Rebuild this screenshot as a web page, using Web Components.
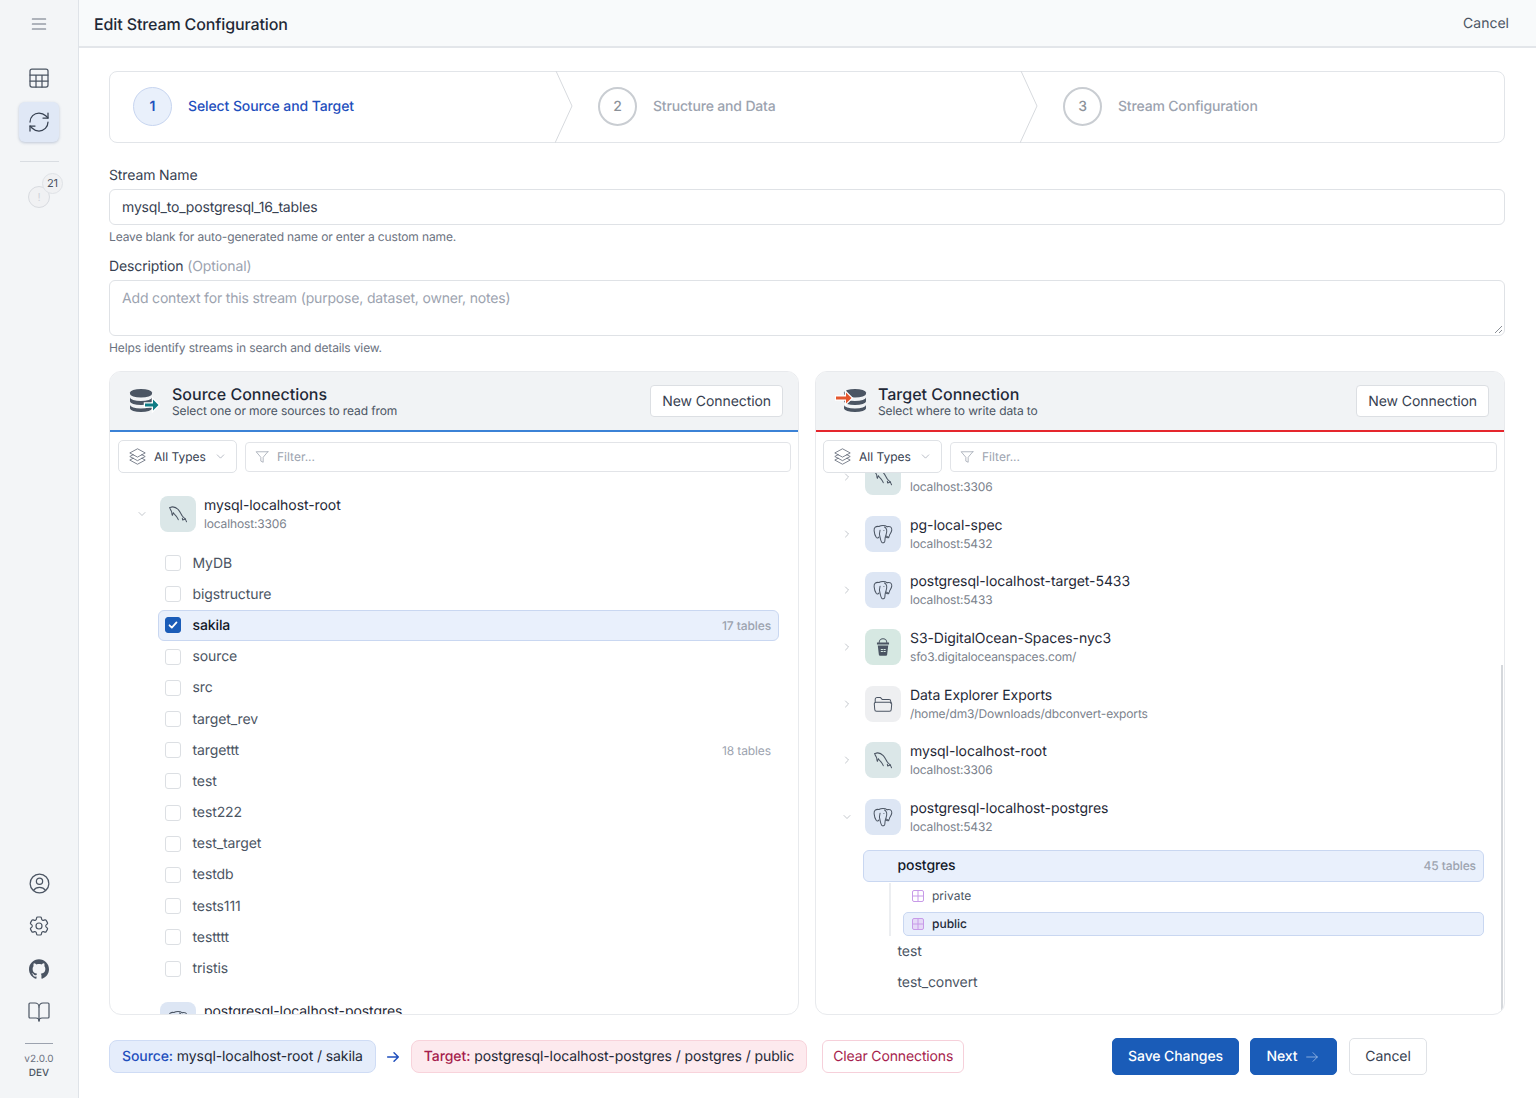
<!DOCTYPE html>
<html lang="en">
<head>
<meta charset="utf-8">
<title>Edit Stream Configuration</title>
<style>
  html, body { margin: 0; height: 100%; }
  body {
    display: flex;
    width: 1536px;
    height: 1098px;
    overflow: hidden;
    background: #fff;
    color: #1f2937;
    font-family: Inter, "Liberation Sans", sans-serif;
    text-rendering: geometricPrecision;
  }
</style>
</head>
<body>
<app-sidebar></app-sidebar>
<main-view>
  <page-header slot="header" heading="Edit Stream Configuration"></page-header>

  <stream-stepper></stream-stepper>

  <form-field label="Stream Name" value="mysql_to_postgresql_16_tables" help="Leave blank for auto-generated name or enter a custom name."></form-field>
  <form-field label="Description" optional="(Optional)" multiline placeholder="Add context for this stream (purpose, dataset, owner, notes)" help="Helps identify streams in search and details view."></form-field>

  <panel-row>
    <conn-panel heading="Source Connections" sub="Select one or more sources to read from" kind="source">
      <conn-item name="mysql-localhost-root" host="localhost:3306" type="mysql" open></conn-item>
      <db-row name="MyDB" checkable></db-row>
      <db-row name="bigstructure" checkable></db-row>
      <db-row name="sakila" count="17 tables" checkable checked selected></db-row>
      <db-row name="source" checkable></db-row>
      <db-row name="src" checkable></db-row>
      <db-row name="target_rev" checkable></db-row>
      <db-row name="targettt" count="18 tables" checkable></db-row>
      <db-row name="test" checkable></db-row>
      <db-row name="test222" checkable></db-row>
      <db-row name="test_target" checkable></db-row>
      <db-row name="testdb" checkable></db-row>
      <db-row name="tests111" checkable></db-row>
      <db-row name="testttt" checkable></db-row>
      <db-row name="tristis" checkable></db-row>
      <conn-item name="postgresql-localhost-postgres" type="postgres" spaced></conn-item>
    </conn-panel>

    <conn-panel heading="Target Connection" sub="Select where to write data to" kind="target" scrolled>
      <conn-item host="localhost:3306" type="mysql"></conn-item>
      <conn-item name="pg-local-spec" host="localhost:5432" type="postgres"></conn-item>
      <conn-item name="postgresql-localhost-target-5433" host="localhost:5433" type="postgres"></conn-item>
      <conn-item name="S3-DigitalOcean-Spaces-nyc3" host="sfo3.digitaloceanspaces.com/" type="s3"></conn-item>
      <conn-item name="Data Explorer Exports" host="/home/dm3/Downloads/dbconvert-exports" type="folder"></conn-item>
      <conn-item name="mysql-localhost-root" host="localhost:3306" type="mysql"></conn-item>
      <conn-item name="postgresql-localhost-postgres" host="localhost:5432" type="postgres" open></conn-item>
      <db-row name="postgres" count="45 tables" selected></db-row>
      <schema-group>
        <schema-row name="private"></schema-row>
        <schema-row name="public" selected></schema-row>
      </schema-group>
      <db-row name="test"></db-row>
      <db-row name="test_convert"></db-row>
    </conn-panel>
  </panel-row>

  <stream-footer></stream-footer>
</main-view>

<script>
/** Stroke and fill paths for every icon on the page, in a 24x24 box. */
const ICONS = {
  menu: '<path d="M4 6h16M4 12h16M4 18h16"/>',
  table: '<rect x="3" y="3" width="18" height="18" rx="2"/><path d="M3 9h18M3 15h18M9 9v12M15 9v12"/>',
  refresh: '<path d="M3 12a9 9 0 0 1 9-9 9.75 9.75 0 0 1 6.74 2.74L21 8"/><path d="M21 3v5h-5"/><path d="M21 12a9 9 0 0 1-9 9 9.75 9.75 0 0 1-6.74-2.74L3 16"/><path d="M8 16H3v5"/>',
  user: '<path d="M17.982 18.725A7.488 7.488 0 0 0 12 15.75a7.488 7.488 0 0 0-5.982 2.975m11.963 0a9 9 0 1 0-11.963 0m11.963 0A8.966 8.966 0 0 1 12 21a8.966 8.966 0 0 1-5.982-2.275M15 9.75a3 3 0 1 1-6 0 3 3 0 0 1 6 0Z"/>',
  gear: '<path d="M9.594 3.94c.09-.542.56-.94 1.11-.94h2.593c.55 0 1.02.398 1.11.94l.213 1.281c.063.374.313.686.645.87.074.04.147.083.22.127.325.196.72.257 1.075.124l1.217-.456a1.125 1.125 0 0 1 1.37.49l1.296 2.247a1.125 1.125 0 0 1-.26 1.431l-1.003.827c-.293.241-.438.613-.43.992a7.723 7.723 0 0 1 0 .255c-.008.378.137.75.43.991l1.004.827c.424.35.534.955.26 1.43l-1.298 2.247a1.125 1.125 0 0 1-1.369.491l-1.217-.456c-.355-.133-.75-.072-1.076.124a6.47 6.47 0 0 1-.22.128c-.331.183-.581.495-.644.869l-.213 1.281c-.09.543-.56.94-1.11.94h-2.594c-.55 0-1.019-.398-1.11-.94l-.213-1.281c-.062-.374-.312-.686-.644-.87a6.52 6.52 0 0 1-.22-.127c-.325-.196-.72-.257-1.076-.124l-1.217.456a1.125 1.125 0 0 1-1.369-.49l-1.297-2.247a1.125 1.125 0 0 1 .26-1.431l1.004-.827c.292-.24.437-.613.43-.991a6.932 6.932 0 0 1 0-.255c.007-.38-.138-.751-.43-.992l-1.004-.827a1.125 1.125 0 0 1-.26-1.43l1.297-2.247a1.125 1.125 0 0 1 1.37-.491l1.216.456c.356.133.751.072 1.076-.124.072-.044.146-.086.22-.128.332-.183.582-.495.644-.869l.214-1.28Z"/><path d="M15 12a3 3 0 1 1-6 0 3 3 0 0 1 6 0Z"/>',
  github: '<path fill="currentColor" stroke="none" d="M12 .297c-6.63 0-12 5.373-12 12 0 5.303 3.438 9.8 8.205 11.385.6.113.82-.258.82-.577 0-.285-.01-1.04-.015-2.04-3.338.724-4.042-1.61-4.042-1.61C4.422 18.07 3.633 17.7 3.633 17.7c-1.087-.744.084-.729.084-.729 1.205.084 1.838 1.236 1.838 1.236 1.07 1.835 2.809 1.305 3.495.998.108-.776.417-1.305.76-1.605-2.665-.3-5.466-1.332-5.466-5.93 0-1.31.465-2.38 1.235-3.22-.135-.303-.54-1.523.105-3.176 0 0 1.005-.322 3.3 1.23.96-.267 1.98-.399 3-.405 1.02.006 2.04.138 3 .405 2.28-1.552 3.285-1.23 3.285-1.23.645 1.653.24 2.873.12 3.176.765.84 1.23 1.91 1.23 3.22 0 4.61-2.805 5.625-5.475 5.92.42.36.81 1.096.81 2.22 0 1.606-.015 2.896-.015 3.286 0 .315.21.69.825.57C20.565 22.092 24 17.592 24 12.297c0-6.627-5.373-12-12-12"/>',
  book: '<path d="M12 7v14"/><path d="M3 18a1 1 0 0 1-1-1V4a1 1 0 0 1 1-1h5a4 4 0 0 1 4 4 4 4 0 0 1 4-4h5a1 1 0 0 1 1 1v13a1 1 0 0 1-1 1h-6a3 3 0 0 0-3 3 3 3 0 0 0-3-3z"/>',
  layers: '<path d="M6.429 9.75 2.25 12l4.179 2.25m0-4.5 5.571 3 5.571-3m-11.142 0L2.25 7.5 12 2.25l9.75 5.25-4.179 2.25m0 0L21.75 12l-4.179 2.25m0 0 4.179 2.25L12 21.75 2.25 16.5l4.179-2.25m11.142 0-5.571 3-5.571-3"/>',
  funnel: '<path d="M22 3H2l8 9.46V19l4 2v-8.54L22 3z"/>',
  down: '<path d="M6 9l6 6 6-6"/>',
  right: '<path d="M9 6l6 6-6 6"/>',
  arrow: '<path d="M4 12h16M13.5 5.5 20 12l-6.5 6.5"/>',
  check: '<path d="M6 12.5l4 4 8-9"/>',
  mysql: '<path d="M3 5c3-1.4 6.5-.7 9.3 2.2 2.2 2.3 3 5 4.4 7 1 1.4 2.3 2.3 3.3 3.2"/><path d="M3 5c.2 1.8 1.5 3 2 4.5.4 1.3.1 2.6.8 4 .6-1 .8-2.1 1.1-3 1 1.8 2.6 3 3.8 4.7.7 1 1.2 2 1.6 3"/><path d="M20 17.4c.4 1 .9 2 1.3 3.1M20 17.4l-2.9 1.1M16.7 16.5l.4 2"/>',
  postgres: '<path d="M7.5 3.8C4.2 3.2 2 5 2.3 8.3c.2 2.5 1.1 5.6 2.3 7.3.9 1.2 2.1 1 2.9-.4"/><path d="M7.5 3.8C8.9 3 10.4 2.7 12 2.7c1.7 0 3.3.4 4.4 1.3"/><path d="M16.4 4c3-.9 5.4.5 5.2 3.5-.1 2-1.2 3.5-2.2 5-.5.9-.2 2.1-1.1 2.6-.9.5-1.9-.1-2.4-.8"/><path d="M8.8 7.8c-.9 2.5-.8 5.5.1 8.3.5 1.8.7 3.9 1.8 5 1.2 1.1 3 .5 3.3-1.3.2-1.6.1-3.6.8-5.4.8-2.2 1.8-3.9 1.2-6.8-.3-1.3-1.1-2.6-2.3-3.3"/><path d="M13 8.2h.01M15.1 15.4c1.1.7 2.2.9 3.3.5"/>',
  s3: '<path d="M7.8 7.2a4.2 4.2 0 0 1 8.4 0"/><path fill="currentColor" stroke="none" d="M5.4 7h13.2v2.4H5.4zM6.3 10.4h11.4l-1.2 10.1c-.1.7-.6 1.1-1.2 1.1H8.7c-.6 0-1.1-.4-1.2-1.1z"/><path stroke="#d6e8e2" d="M10 14.8h1.5M13 14.8h1.5M10 16.8h1.5M13 16.8h1.5"/>',
  folder: '<path d="M3.5 10V7a2 2 0 0 1 2-2h3.8l2 2.2h7.2a2 2 0 0 1 2 2v2"/><path d="M2.5 12a2 2 0 0 1 2-2h15a2 2 0 0 1 2 2l-.5 6a2 2 0 0 1-2 2H5a2 2 0 0 1-2-2z"/>'
};

/**
 * Inline SVG icon.
 * @extends HTMLElement
 */
class UiIcon extends HTMLElement {
  constructor() {
    super();
    this.attachShadow({ mode: 'open' });
  }

  connectedCallback() {
    const size = this.getAttribute('size') || 20;
    const weight = this.getAttribute('weight') || 1.5;
    this.shadowRoot.innerHTML = `
      <style>
        :host { display: inline-flex; flex: none; width: ${size}px; height: ${size}px; }
        svg { display: block; width: 100%; height: 100%; }
      </style>
      <svg viewBox="0 0 24 24" fill="none" stroke="currentColor" stroke-width="${weight}" stroke-linecap="round" stroke-linejoin="round">${ICONS[this.getAttribute('name')]}</svg>`;
  }
}

/**
 * Left navigation rail.
 * @extends HTMLElement
 */
class AppSidebar extends HTMLElement {
  constructor() {
    super();
    this.attachShadow({ mode: 'open' });
  }

  connectedCallback() {
    this.shadowRoot.innerHTML = `
      <style>
        :host {
          display: flex; flex-direction: column; align-items: center; flex: none;
          box-sizing: border-box; width: 79px; height: 1098px;
          background: #f3f5f7; border-right: 1px solid #dfe3e8; color: #4b5563;
        }
        .burger { height: 48px; display: flex; align-items: center; color: #6b7280; }
        .btn { width: 40px; height: 40px; display: flex; align-items: center; justify-content: center; border-radius: 6px; }
        .nav { display: flex; flex-direction: column; gap: 4px; margin-top: 10px; }
        .active { background: #e0e8f6; box-shadow: 0 1px 3px rgba(30, 64, 120, .25); color: #374151; }
        hr { border: 0; height: 1px; background: #d9dde2; width: 39px; margin: 19px 0 0; }
        .alert { position: relative; margin-top: 24px; width: 20px; height: 20px; border: 1px solid #d8dbe0; border-radius: 50%; background: #f0f1f3; color: #d1d5db; font-size: 11px; line-height: 20px; text-align: center; }
        .badge { position: absolute; left: 13px; top: -14px; width: 19px; height: 19px; border: 1px solid #dfe2e6; border-radius: 50%; background: #f0f1f3; color: #4b5563; font-size: 11px; line-height: 19px; }
        .bottom { margin-top: auto; display: flex; flex-direction: column; align-items: center; gap: 3px; }
        .rule { width: 28px; height: 1px; background: #9ca3af; margin: 8px 0 0; }
        .ver { padding: 5px 0 18px; font-size: 10px; line-height: 14px; text-align: center; color: #6b7280; }
        .ver b { display: block; font-weight: 500; color: #4b5563; }
      </style>
      <div class="burger"><ui-icon name="menu" size="20" weight="1.3"></ui-icon></div>
      <div class="nav">
        <div class="btn"><ui-icon name="table" size="24" weight="1.25"></ui-icon></div>
        <div class="btn active"><ui-icon name="refresh" size="24" weight="1.25"></ui-icon></div>
      </div>
      <hr>
      <div class="alert">!<div class="badge">21</div></div>
      <div class="bottom">
        <div class="btn"><ui-icon name="user" size="25" weight="1.2"></ui-icon></div>
        <div class="btn"><ui-icon name="gear" size="24" weight="1.2"></ui-icon></div>
        <div class="btn"><ui-icon name="github" size="20"></ui-icon></div>
        <div class="btn"><ui-icon name="book" size="24" weight="1.2"></ui-icon></div>
        <div class="rule"></div>
        <div class="ver">v2.0.0<b>DEV</b></div>
      </div>`;
  }
}

/**
 * Page body: a header slot over a padded column.
 * @extends HTMLElement
 */
class MainView extends HTMLElement {
  constructor() {
    super();
    this.attachShadow({ mode: 'open' });
  }

  connectedCallback() {
    this.shadowRoot.innerHTML = `
      <style>
        :host { display: flex; flex-direction: column; flex: 1; min-width: 0; height: 1098px; }
        .body { display: flex; flex-direction: column; padding: 23px 31px 0 30px; }
      </style>
      <slot name="header"></slot>
      <div class="body"><slot></slot></div>`;
  }
}

/**
 * Top bar with the page title and a cancel link.
 * @extends HTMLElement
 */
class PageHeader extends HTMLElement {
  constructor() {
    super();
    this.attachShadow({ mode: 'open' });
  }

  connectedCallback() {
    this.shadowRoot.innerHTML = `
      <style>
        :host {
          display: flex; align-items: center; justify-content: space-between;
          box-sizing: border-box; height: 48px; padding: 0 27px 0 15px;
          background: #f8fafb; border-bottom: 2px solid #e3e6ea;
        }
        h1 { margin: 1px 0 0; font-size: 16px; font-weight: 500; color: #1f2937; letter-spacing: -.12px; }
        span { font-size: 14px; color: #4b5563; }
      </style>
      <h1>${this.getAttribute('heading')}</h1>
      <span>Cancel</span>`;
  }
}

/**
 * The three wizard steps.
 * @extends HTMLElement
 */
class StreamStepper extends HTMLElement {
  constructor() {
    super();
    this.attachShadow({ mode: 'open' });
  }

  connectedCallback() {
    const steps = ['Select Source and Target', 'Structure and Data', 'Stream Configuration'];
    this.shadowRoot.innerHTML = `
      <style>
        :host { display: flex; box-sizing: border-box; height: 72px; border: 1px solid #e2e5e9; border-radius: 8px; background: #fff; }
        .step { position: relative; flex: 0 0 465px; box-sizing: border-box; display: flex; align-items: center; gap: 16px; padding: 0 0 2px 23px; font-size: 14px; font-weight: 500; color: #9ca3af; letter-spacing: -.17px; }
        .num { box-sizing: border-box; width: 39px; height: 39px; border: 2px solid #c9cdd2; border-radius: 50%; display: flex; align-items: center; justify-content: center; color: #8b9199; }
        .on { color: #1f4fbd; letter-spacing: -.1px; }
        .on .num { border: 1px solid #c7d5f0; background: #e9f0fb; color: #1f4fbd; font-weight: 600; }
        svg { position: absolute; right: 2px; top: -1px; width: 18px; height: 72px; }
      </style>
      ${steps.map((s, i) => `
        <div class="step ${i === 0 ? 'on' : ''}">
          <div class="num">${i + 1}</div><div>${s}</div>
          ${i < 2 ? '<svg viewBox="0 0 18 72" fill="none" stroke="#d7dade"><path d="M1 0l16 35L0 72"/></svg>' : ''}
        </div>`).join('')}`;
  }
}

/**
 * Labelled text box with a help line.
 * @extends HTMLElement
 */
class FormField extends HTMLElement {
  constructor() {
    super();
    this.attachShadow({ mode: 'open' });
  }

  connectedCallback() {
    const multi = this.hasAttribute('multiline');
    const value = this.getAttribute('value');
    const optional = this.getAttribute('optional');
    this.shadowRoot.innerHTML = `
      <style>
        :host { display: block; margin-top: ${multi ? 11 : 22}px; font-size: 14px; }
        label { display: block; height: 20px; line-height: 22px; margin-bottom: 4px; color: #374151; letter-spacing: -.12px; }
        label span { color: #9ca3af; }
        .box {
          position: relative; box-sizing: border-box; height: ${multi ? 56 : 36}px;
          padding: ${multi ? '9px' : '0'} 12px; line-height: ${multi ? '18px' : '35px'};
          border: 1px solid #dfe2e6; border-radius: 6px; color: #374151; background: #fff; letter-spacing: -.17px;
        }
        .ph { color: #9ca3af; }
        .grip { position: absolute; right: 1px; bottom: 1px; width: 9px; height: 9px; }
        .help { margin-top: 4px; font-size: 12px; line-height: 16px; color: #6b7280; letter-spacing: -.13px; }
      </style>
      <label>${this.getAttribute('label')}${optional ? ` <span>${optional}</span>` : ''}</label>
      <div class="box">
        ${value ? value : `<span class="ph">${this.getAttribute('placeholder')}</span>`}
        ${multi ? '<svg class="grip" viewBox="0 0 9 9" stroke="#8a8f96"><path d="M8 1 1 8M8 5 5 8"/></svg>' : ''}
      </div>
      <div class="help">${this.getAttribute('help')}</div>`;
  }
}

/**
 * Two panels side by side.
 * @extends HTMLElement
 */
class PanelRow extends HTMLElement {
  constructor() {
    super();
    this.attachShadow({ mode: 'open' });
  }

  connectedCallback() {
    this.shadowRoot.innerHTML = `
      <style>:host { display: grid; grid-template-columns: 690px 690px; gap: 16px; margin-top: 15px; }</style>
      <slot></slot>`;
  }
}

/**
 * Connection panel: heading, filter bar and a clipped list.
 * @extends HTMLElement
 */
class ConnPanel extends HTMLElement {
  constructor() {
    super();
    this.attachShadow({ mode: 'open' });
  }

  /** Database stack with a block arrow going out (source) or in (target). */
  logo(kind) {
    const source = kind === 'source';
    const stack = `
      <g fill="#4b5563" transform="translate(${source ? 1 : 9} 1)">
        <path d="M0 3.5a11 3.5 0 0 1 22 0v1.5a11 3.5 0 0 1-22 0z"/>
        <path d="M0 8.5a11 3.5 0 0 0 22 0v4a11 3.5 0 0 1-22 0z"/>
        <path d="M0 16a11 3.5 0 0 0 22 0v3.5a11 3.5 0 0 1-22 0z"/>
      </g>`;
    const arrow = source
      ? 'M16 15.5h8v-4l5.5 5.5-5.5 5.5v-4h-8z'
      : 'M1 8.5h10v-4l5.500 5.500-5.500 5.500v-4H1z';
    return `<svg class="logo" viewBox="0 0 32 26">${stack}
      <path d="${arrow}" fill="${source ? '#0f7c85' : '#e4572e'}" stroke="#fff" stroke-width="2.5" paint-order="stroke"/>
    </svg>`;
  }

  connectedCallback() {
    const kind = this.getAttribute('kind');
    const scrolled = this.hasAttribute('scrolled');
    this.shadowRoot.innerHTML = `
      <style>
        :host {
          display: flex; flex-direction: column; box-sizing: border-box; height: 644px;
          border: 1px solid #e8eaed; border-radius: 12px; overflow: hidden; background: #fff;
          --txt-gap: ${scrolled ? 9.5 : 8.5}px;
          --row-right: ${scrolled ? 20 : 19}px;
        }
        header {
          display: flex; align-items: center; flex: none; box-sizing: border-box; height: 60px;
          padding: 0 15px 0 19px; gap: 11px;
          background: #f1f3f5; border-bottom: 2px solid ${kind === 'source' ? '#3b82d6' : '#e5262d'};
        }
        .logo { width: 32px; height: 26px; flex: none; }
        .txt { flex: 1; }
        h2 { margin: 0; font-size: 16px; line-height: 20px; font-weight: 500; color: #1f2937; }
        p { margin: -1px 0 0; font-size: 12px; line-height: 15px; color: #4b5563; letter-spacing: -.1px; }
        .new { box-sizing: border-box; height: 32px; line-height: 31px; padding: 0 11px; border: 1px solid #dcdfe3; border-radius: 4px; background: #fff; font-size: 14px; color: #374151; letter-spacing: -.08px; }
        .bar { display: flex; align-items: center; gap: 8px; flex: none; height: 41px; padding: 8px 7px 0 ${scrolled ? 7 : 8}px; box-sizing: border-box; font-size: 12px; }
        .sel { display: flex; align-items: center; box-sizing: border-box; width: 119px; height: 33px; padding: 0 9px; gap: 7px; border: 1px solid #dfe2e6; border-radius: 5px; color: #374151; white-space: nowrap; }
        .sel ui-icon:first-child { color: #6b7280; }
        .sel ui-icon:last-child { color: #9ca3af; margin-left: auto; }
        .flt { display: flex; align-items: center; flex: 1; box-sizing: border-box; height: 30px; padding: 0 9px; gap: 8px; border: 1px solid #e2e4e8; border-radius: 4px; color: #9ca3af; }
        .list { position: relative; flex: 1; min-height: 0; overflow: hidden; }
        .inner { margin: ${scrolled ? -24 : 12.7}px 0 0 ${scrolled ? -1 : 0}px; }
        .thumb { position: absolute; right: 1px; top: 192px; width: 2px; height: 345px; background: #d5d8dc; }
      </style>
      <header>
        ${this.logo(kind)}
        <div class="txt"><h2>${this.getAttribute('heading')}</h2><p>${this.getAttribute('sub')}</p></div>
        <div class="new">New Connection</div>
      </header>
      <div class="bar">
        <div class="sel">
          <ui-icon name="layers" size="19" weight="1.1"></ui-icon>
          <span>All Types</span>
          <ui-icon name="down" size="13" weight="1.3"></ui-icon>
        </div>
        <div class="flt"><ui-icon name="funnel" size="14" weight="1.3"></ui-icon><span>Filter...</span></div>
      </div>
      <div class="list">
        <div class="inner"><slot></slot></div>
        ${scrolled ? '<div class="thumb"></div>' : ''}
      </div>`;
  }
}

/**
 * One connection in a list: chevron, type tile, name and host.
 * @extends HTMLElement
 */
class ConnItem extends HTMLElement {
  constructor() {
    super();
    this.attachShadow({ mode: 'open' });
  }

  connectedCallback() {
    const tile = { mysql: '#dbe7e8', postgres: '#dde6f4', s3: '#d6e8e2', folder: '#eeeff1' }[this.getAttribute('type')];
    this.shadowRoot.innerHTML = `
      <style>
        :host {
          display: flex; align-items: center; box-sizing: border-box; height: 56.6px; padding-left: 25.5px;
          margin-top: ${this.hasAttribute('spaced') ? 7.7 : 0}px;
        }
        .chev { color: #a3a8b0; width: 12px; margin-right: 12px; display: flex; }
        .tile { width: 36px; height: 36px; flex: none; border-radius: 8px; background: ${tile}; display: flex; align-items: center; justify-content: center; color: #4b5563; }
        .txt { margin-left: var(--txt-gap); }
        .name { height: 19px; font-size: 14px; line-height: 21px; color: #1f2937; letter-spacing: -.07px; }
        .host { height: 19px; font-size: 12px; line-height: 19px; color: #7b828c; letter-spacing: -.15px; }
      </style>
      <div class="chev"><ui-icon name="${this.hasAttribute('open') ? 'down' : 'right'}" size="12" weight="1.3"></ui-icon></div>
      <div class="tile"><ui-icon name="${this.getAttribute('type')}" size="22" weight="1.1"></ui-icon></div>
      <div class="txt"><div class="name">${this.getAttribute('name') || ''}</div><div class="host">${this.getAttribute('host') || ''}</div></div>`;
  }
}

/**
 * One database under an open connection.
 * @extends HTMLElement
 */
class DbRow extends HTMLElement {
  constructor() {
    super();
    this.attachShadow({ mode: 'open' });
  }

  connectedCallback() {
    const checkable = this.hasAttribute('checkable');
    const selected = this.hasAttribute('selected');
    const checked = this.hasAttribute('checked');
    const count = this.getAttribute('count');
    // the first row under an open connection sits a little lower
    const first = this.previousElementSibling && this.previousElementSibling.localName === 'conn-item';
    this.shadowRoot.innerHTML = `
      <style>
        :host {
          display: flex; align-items: center; box-sizing: border-box; height: 31.2px;
          margin: ${first ? 5.2 : 0}px var(--row-right) 0 47.5px; padding: 0 7px 0 ${checkable ? 6 : 34}px;
          border: 1px solid ${selected ? '#c9d7f1' : 'transparent'}; border-radius: 6px;
          background: ${selected ? '#e9f0fc' : 'transparent'}; font-size: 14px;
          color: ${selected ? '#111827' : '#4b5563'}; font-weight: ${selected ? 500 : 400};
        }
        .box { box-sizing: border-box; width: 16px; height: 16px; margin-right: 12px; border: 1px solid #dcdfe3; border-radius: 3px; background: #fff; display: flex; align-items: center; justify-content: center; color: #fff; }
        .box.on { border-color: #1a5cb8; background: #1a5cb8; }
        .name { flex: 1; letter-spacing: -.1px; }
        .count { font-size: 12px; letter-spacing: -.1px; color: #9ca3af; font-weight: ${selected ? 500 : 400}; }
      </style>
      ${checkable ? `<div class="box ${checked ? 'on' : ''}">${checked ? '<ui-icon name="check" size="14" weight="3"></ui-icon>' : ''}</div>` : ''}
      <div class="name">${this.getAttribute('name')}</div>
      ${count ? `<div class="count">${count}</div>` : ''}`;
  }
}

/**
 * Indented schemas under a database, with a guide line.
 * @extends HTMLElement
 */
class SchemaGroup extends HTMLElement {
  constructor() {
    super();
    this.attachShadow({ mode: 'open' });
  }

  connectedCallback() {
    this.shadowRoot.innerHTML = `
      <style>
        :host { display: block; margin: 1px var(--row-right) 0 74px; padding-left: 12px; border-left: 2px solid #eceef1; }
      </style>
      <slot></slot>`;
  }
}

/**
 * One schema row.
 * @extends HTMLElement
 */
class SchemaRow extends HTMLElement {
  constructor() {
    super();
    this.attachShadow({ mode: 'open' });
  }

  connectedCallback() {
    const selected = this.hasAttribute('selected');
    this.shadowRoot.innerHTML = `
      <style>
        :host {
          display: flex; align-items: center; box-sizing: border-box; height: ${selected ? 24 : 26}px; gap: 8px; padding-left: 8px;
          margin-bottom: ${selected ? 0 : 3}px;
          border: 1px solid ${selected ? '#c9d7f1' : 'transparent'}; border-radius: 5px;
          background: ${selected ? '#e9f0fc' : 'transparent'}; font-size: 12px;
          color: ${selected ? '#1f2937' : '#4b5563'}; font-weight: ${selected ? 500 : 400};
        }
        svg { width: 12px; height: 12px; flex: none; }
      </style>
      <svg viewBox="0 0 12 12" fill="${selected ? '#e5d9f7' : 'none'}" stroke="#c79ae8"><rect x=".5" y=".5" width="11" height="11" rx="1.5"/><path d="M.5 6h11M6 .5v11"/></svg>
      <span>${this.getAttribute('name')}</span>`;
  }
}

/**
 * Bottom bar: the chosen pair of connections and the actions.
 * @extends HTMLElement
 */
class StreamFooter extends HTMLElement {
  constructor() {
    super();
    this.attachShadow({ mode: 'open' });
  }

  connectedCallback() {
    this.shadowRoot.innerHTML = `
      <style>
        :host { display: flex; align-items: center; height: 37px; margin-top: 23px; padding-right: 78px; font-size: 14px; letter-spacing: -.09px; }
        .pill { box-sizing: border-box; height: 33px; line-height: 31px; padding: 0 12px; border-radius: 8px; color: #1f2937; white-space: nowrap; }
        .src { background: #e5edfb; border: 1px solid #cfdcf5; }
        .src b { color: #1f4fbd; font-weight: 500; }
        .tgt { background: #fdeaee; border: 1px solid #f8d3db; }
        .tgt b { color: #a61e4d; font-weight: 500; }
        .arr { color: #1f4fbd; margin: 0 9.5px; display: flex; }
        .clear { box-sizing: border-box; height: 33px; line-height: 31px; padding: 0 10px; margin-left: 15px; border: 1px solid #f6d0da; border-radius: 6px; color: #a61e4d; letter-spacing: -.13px; }
        .acts { margin-left: auto; display: flex; gap: 11px; }
        .btn { box-sizing: border-box; height: 37px; line-height: 35px; border-radius: 5px; border: 1px solid #1a5cb8; background: #1a5cb8; color: #fff; font-weight: 500; display: flex; align-items: center; justify-content: center; }
        .save { width: 127px; }
        .next { width: 87px; gap: 7px; }
        .next ui-icon { color: #bcd2f2; }
        .cancel { width: 78px; margin-left: 1px; background: #fff; border-color: #dfe2e6; color: #374151; font-weight: 400; }
      </style>
      <div class="pill src"><b>Source:</b> mysql-localhost-root / sakila</div>
      <div class="arr"><ui-icon name="arrow" size="16" weight="2.2"></ui-icon></div>
      <div class="pill tgt"><b>Target:</b> postgresql-localhost-postgres / postgres / public</div>
      <div class="clear">Clear Connections</div>
      <div class="acts">
        <div class="btn save">Save Changes</div>
        <div class="btn next">Next <ui-icon name="arrow" size="16" weight="1"></ui-icon></div>
        <div class="btn cancel">Cancel</div>
      </div>`;
  }
}

customElements.define('ui-icon', UiIcon);
customElements.define('app-sidebar', AppSidebar);
customElements.define('main-view', MainView);
customElements.define('page-header', PageHeader);
customElements.define('stream-stepper', StreamStepper);
customElements.define('form-field', FormField);
customElements.define('panel-row', PanelRow);
customElements.define('conn-panel', ConnPanel);
customElements.define('conn-item', ConnItem);
customElements.define('db-row', DbRow);
customElements.define('schema-group', SchemaGroup);
customElements.define('schema-row', SchemaRow);
customElements.define('stream-footer', StreamFooter);
</script>
</body>
</html>
